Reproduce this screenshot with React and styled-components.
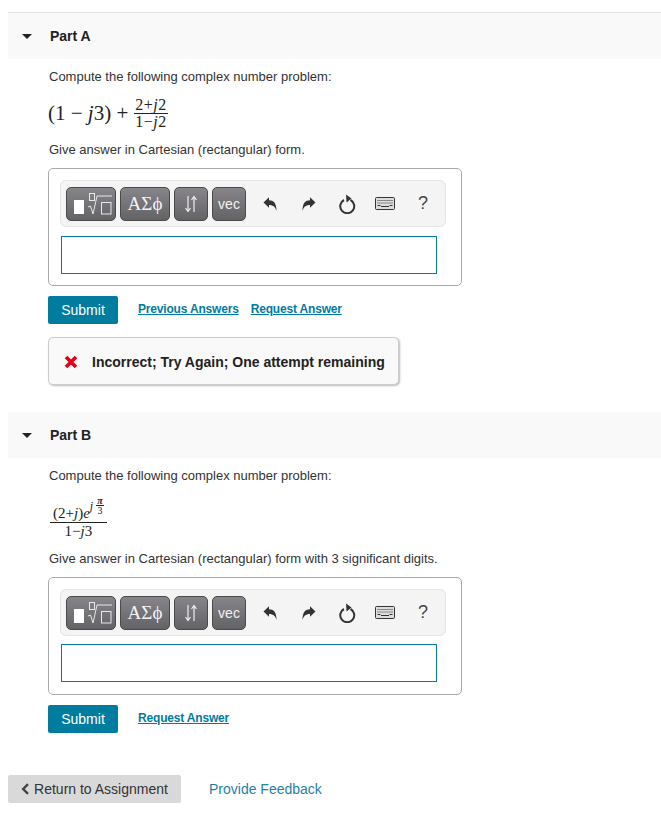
import React from 'react';
import styled, { createGlobalStyle } from 'styled-components';

const Global = createGlobalStyle`
  html, body { margin: 0; padding: 0; background: #fff; }
  body { font-family: "Liberation Sans", Arial, sans-serif; color: #333; font-size: 13px; }
`;

const Page = styled.div`
  padding: 12px 0 0 8px;
  height: 816px;
  overflow: hidden;
`;
const Part = styled.section`
  border-top: ${(p) => (p.$ruled ? '1px solid #e0e0e0' : '0')};
  margin-top: ${(p) => p.$top || 0}px;
`;
const PartHeader = styled.div`
  display: flex;
  align-items: center;
  height: 46px;
  padding-left: 14px;
  background: #f9f9f9;
  h2 { margin: 0; font-size: 14px; font-weight: 700; color: #222; }
`;
const Caret = styled.span`
  width: 0;
  height: 0;
  margin-right: 18px;
  border-left: 5.5px solid transparent;
  border-right: 5.5px solid transparent;
  border-top: 5.5px solid #222;
`;
const Body = styled.div`
  padding-left: 40px;
`;
const Text = styled.p`
  margin: ${(p) => p.$top}px 0 0 1px;
  height: 16px;
  line-height: 16px;
  font-size: 13px;
  color: #333;
`;
const MathRow = styled.div`
  display: flex;
  align-items: center;
  height: ${(p) => p.$h}px;
  margin-top: ${(p) => p.$top}px;
  font-family: "Liberation Serif", "DejaVu Serif", serif;
  font-size: ${(p) => p.$size}px;
  color: #222;
  white-space: pre;
  i { font-style: italic; }
`;
const Frac = styled.span`
  display: inline-flex;
  flex-direction: column;
  align-items: center;
  font-size: ${(p) => p.$size}px;
  line-height: ${(p) => p.$line}px;
  letter-spacing: ${(p) => p.$track || 0}px;
  margin-left: ${(p) => p.$left || 0}px;
`;
const Num = styled.span`
  display: block;
  padding: 0 ${(p) => p.$pad || 0}px;
  border-bottom: 1px solid #222;
  white-space: pre;
`;
const Den = styled.span`
  display: block;
  white-space: pre;
`;
const Sup = styled.span`
  display: inline-flex;
  align-items: center;
  font-size: 12px;
  vertical-align: 8px;
  line-height: 10px;
`;
const MiniFrac = styled.span`
  display: inline-flex;
  flex-direction: column;
  align-items: center;
  font-size: 10px;
  line-height: 9px;
  margin-left: 3px;
  b { font-weight: 700; border-bottom: 1px solid #222; padding: 0 1px; }
`;
const Widget = styled.div`
  box-sizing: border-box;
  width: 414px;
  height: 118px;
  margin-top: ${(p) => p.$top}px;
  padding: 11px 15px 0 11px;
  border: 1px solid #aaa;
  border-radius: 5px;
`;
const Toolbar = styled.div`
  box-sizing: border-box;
  display: flex;
  align-items: center;
  width: 386px;
  height: 47px;
  padding-left: 5px;
  gap: 4px;
  background: #f4f4f4;
  border: 1px solid #e4e4e4;
  border-radius: 6px;
`;
const ToolButton = styled.div`
  box-sizing: border-box;
  display: flex;
  align-items: center;
  justify-content: center;
  width: ${(p) => p.$w}px;
  height: 34px;
  color: #f2f2f2;
  font-family: ${(p) => (p.$serif ? '"Liberation Serif", serif' : '"Liberation Sans", sans-serif')};
  font-size: ${(p) => p.$fs || 14}px;
  background: linear-gradient(#87858a, #636265);
  border: 1px solid #4a4a4a;
  border-radius: 5px;
`;
const Actions = styled.div`
  display: flex;
  align-items: center;
  margin-left: 12px;
`;
const Action = styled.div`
  display: flex;
  justify-content: center;
  align-items: center;
  width: ${(p) => p.$w}px;
  color: #444;
  font-size: 18px;
  svg { flex: none; }
`;
const Input = styled.div`
  box-sizing: border-box;
  width: 376px;
  height: 38px;
  margin: ${(p) => p.$gap}px 0 0 1px;
  background: #fff;
  border: 1px solid #007c9e;
`;
const Controls = styled.div`
  display: flex;
  align-items: center;
  margin-top: 10px;
`;
const Submit = styled.button`
  width: 70px;
  height: 28px;
  padding: 0;
  font: 14px "Liberation Sans", sans-serif;
  color: #fff;
  background: #007c9e;
  border: 0;
  border-radius: 2px;
`;
const SmallLink = styled.a`
  position: relative;
  top: -1px;
  margin-left: ${(p) => p.$left}px;
  font-size: 12px;
  letter-spacing: -0.18px;
  font-weight: 700;
  color: #007c9e;
  text-decoration: underline;
`;
const Feedback = styled.div`
  box-sizing: border-box;
  display: flex;
  align-items: center;
  width: 351px;
  height: 48px;
  margin-top: 13px;
  padding: 1px 0 0 15px;
  background: #f9f9f9;
  border: 1px solid #ccc;
  border-radius: 5px;
  box-shadow: 1px 1px 2px #bbb;
  span { margin-left: 14px; font-size: 14px; font-weight: 700; color: #222; }
`;
const Footer = styled.div`
  display: flex;
  align-items: center;
  margin-top: 42px;
`;
const BackButton = styled.div`
  display: flex;
  align-items: center;
  justify-content: center;
  gap: 4px;
  width: 173px;
  height: 28px;
  background: #d9d9d9;
  border-radius: 2px;
  color: #333;
  font-size: 14px;
`;
const FeedbackLink = styled.a`
  margin-left: 28px;
  font-size: 14px;
  color: #1f7fa6;
`;

const TemplateIcon = () => (
  <svg width="48" height="32" viewBox="1 1 48 32">
    <rect x="8" y="13" width="10" height="14" fill="#fff" />
    <rect x="23.5" y="6.5" width="5" height="7" fill="none" stroke="#e8e8e8" />
    <path d="M22 20l2.5-1 2.5 8 4-18h15" fill="none" stroke="#e8e8e8" />
    <rect x="35.5" y="15.5" width="9.5" height="11.5" fill="none" stroke="#e8e8e8" />
  </svg>
);
const ArrowsIcon = () => (
  <svg width="14" height="18" viewBox="0 0 14 18">
    <path d="M4 1v15M1.5 13L4 16.5 6.5 13M10 17V2M7.5 5L10 1.5 12.5 5" fill="none" stroke="#eee" strokeWidth="1.2" />
  </svg>
);
const UndoIcon = ({ flip }) => (
  <svg width="14" height="16" viewBox="0 0 14 15" style={flip ? { transform: 'scaleX(-1)' } : undefined}>
    <path d="M0.5 6L6 0.8V3.8C10.5 3.8 13.5 6.5 13.5 14.5C12.5 10.5 10.5 8.4 6 8.4V11.3Z" fill="#333" />
  </svg>
);
const ResetIcon = () => (
  <svg width="17" height="20" viewBox="0 0 17 20">
    <path d="M5 6A7 7 0 1 0 11.5 6" fill="none" stroke="#333" strokeWidth="2" />
    <path d="M7 0.5L12.5 4.5 7.5 8.5Z" fill="#333" />
  </svg>
);
const KeyboardIcon = () => (
  <svg width="20" height="13" viewBox="0 0 20 13">
    <rect x="0.5" y="0.5" width="19" height="12" rx="1" fill="#ddd" stroke="#333" />
    <path d="M2.5 3.5h15M2.5 6h15" stroke="#333" strokeDasharray="1 1" />
    <path d="M2.5 8.5h3M14.5 8.5h3" stroke="#333" />
    <path d="M6 9.5h8" stroke="#333" />
  </svg>
);
const CrossIcon = () => (
  <svg width="14" height="14" viewBox="0 0 14 14">
    <path d="M2 2L12 12M12 2L2 12" stroke="#e2001a" strokeWidth="3.6" />
  </svg>
);
const ChevronIcon = () => (
  <svg width="9" height="12" viewBox="0 0 9 12">
    <path d="M7 1.2L2.2 6 7 10.8" fill="none" stroke="#444" strokeWidth="2.4" />
  </svg>
);

const AnswerBox = ({ inputGap }) => (
  <Widget $top={10}>
    <Toolbar>
      <ToolButton $w={50}><TemplateIcon /></ToolButton>
      <ToolButton $w={50} $serif $fs={19}>ΑΣϕ</ToolButton>
      <ToolButton $w={34}><ArrowsIcon /></ToolButton>
      <ToolButton $w={34}>vec</ToolButton>
      <Actions>
        <Action $w={16}><UndoIcon /></Action>
        <Action $w={62}><UndoIcon flip /></Action>
        <Action $w={14}><ResetIcon /></Action>
        <Action $w={62}><KeyboardIcon /></Action>
        <Action $w={14}>?</Action>
      </Actions>
    </Toolbar>
    <Input $gap={inputGap} />
  </Widget>
);

const App = () => (
  <Page>
    <Global />
    <Part $ruled>
      <PartHeader><Caret /><h2>Part A</h2></PartHeader>
      <Body>
        <Text $top={10}>Compute the following complex number problem:</Text>
        <MathRow $h={41} $top={8} $size={21}>
          (1 − <i>j</i>3) +
          <Frac $size={16} $line={16} $left={6} $track={0.5}>
            <Num $pad={1}>2+<i>j</i>2</Num>
            <Den>1−<i>j</i>2</Den>
          </Frac>
        </MathRow>
        <Text $top={8}>Give answer in Cartesian (rectangular) form.</Text>
        <AnswerBox inputGap={9} />
        <Controls>
          <Submit>Submit</Submit>
          <SmallLink $left={20}>Previous Answers</SmallLink>
          <SmallLink $left={12}>Request Answer</SmallLink>
        </Controls>
        <Feedback><CrossIcon /><span>Incorrect; Try Again; One attempt remaining</span></Feedback>
      </Body>
    </Part>
    <Part $top={27}>
      <PartHeader><Caret /><h2>Part B</h2></PartHeader>
      <Body>
        <Text $top={10}>Compute the following complex number problem:</Text>
        <MathRow $h={60} $top={4} $size={15}>
          <Frac $size={15} $line={17} $left={2}>
            <Num $pad={3}>(2+<i>j</i>)<i>e</i><Sup><i>j</i><MiniFrac><b><i>π</i></b><span>3</span></MiniFrac></Sup></Num>
            <Den>1−<i>j</i>3</Den>
          </Frac>
        </MathRow>
        <Text $top={3}>Give answer in Cartesian (rectangular) form with 3 significant digits.</Text>
        <AnswerBox inputGap={8} />
        <Controls>
          <Submit>Submit</Submit>
          <SmallLink $left={20}>Request Answer</SmallLink>
        </Controls>
      </Body>
    </Part>
    <Footer>
      <BackButton><ChevronIcon />Return to Assignment</BackButton>
      <FeedbackLink>Provide Feedback</FeedbackLink>
    </Footer>
  </Page>
);

export default App;
